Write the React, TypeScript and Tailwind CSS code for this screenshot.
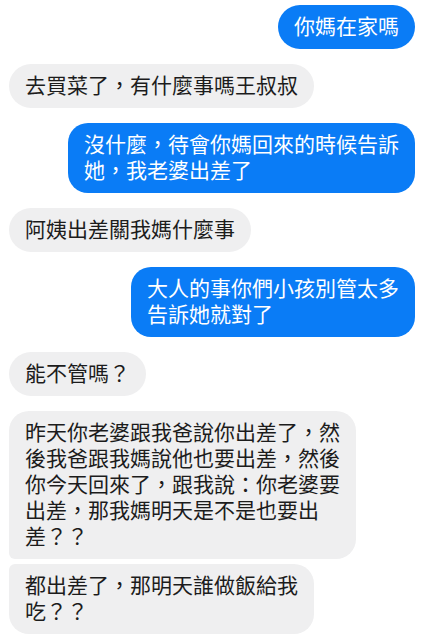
import React from "react";

type Msg = {
  id: number;
  mine: boolean;
  lines: string[];
  shape?: string;
  gap?: string;
};

const messages: Msg[] = [
  { id: 1, mine: true, lines: ["你媽在家嗎"] },
  { id: 2, mine: false, lines: ["去買菜了，有什麼事嗎王叔叔"] },
  { id: 3, mine: true, lines: ["沒什麼，待會你媽回來的時候告訴", "她，我老婆出差了"] },
  { id: 4, mine: false, lines: ["阿姨出差關我媽什麼事"] },
  { id: 5, mine: true, lines: ["大人的事你們小孩別管太多", "告訴她就對了"] },
  { id: 6, mine: false, lines: ["能不管嗎？"] },
  {
    id: 7,
    mine: false,
    lines: [
      "昨天你老婆跟我爸說你出差了，然",
      "後我爸跟我媽說他也要出差，然後",
      "你今天回來了，跟我說：你老婆要",
      "出差，那我媽明天是不是也要出",
      "差？？",
    ],
    shape: "rounded-[20px] rounded-bl-[6px]",
  },
  {
    id: 8,
    mine: false,
    lines: ["都出差了，那明天誰做飯給我", "吃？？"],
    shape: "rounded-[20px] rounded-tl-[6px]",
    gap: "mt-[5px]",
  },
];

function Bubble({ msg }: { msg: Msg }) {
  const single = msg.lines.length === 1;
  const shape = msg.shape ?? (single ? "rounded-full" : "rounded-[20px]");
  const colors = msg.mine
    ? "bg-[#0a7cf6] text-white self-end"
    : "bg-[#efeff0] text-[#1c1c1c] self-start";

  return (
    <div className={`${msg.gap ?? "mt-[15px]"} first:mt-0 w-fit px-4 py-[9px] ${shape} ${colors}`}>
      {msg.lines.map((line, i) => (
        <div key={i} className="h-[26px] text-[21px] leading-[26px] whitespace-nowrap">
          {line}
        </div>
      ))}
    </div>
  );
}

export default function App() {
  return (
    <div
      className="min-h-screen w-[424px] bg-white px-[9px] pt-[5px] flex flex-col"
      style={{ fontFamily: '"Liberation Sans", "Noto Sans CJK TC", sans-serif' }}
    >
      {messages.map((m) => (
        <Bubble key={m.id} msg={m} />
      ))}
    </div>
  );
}
